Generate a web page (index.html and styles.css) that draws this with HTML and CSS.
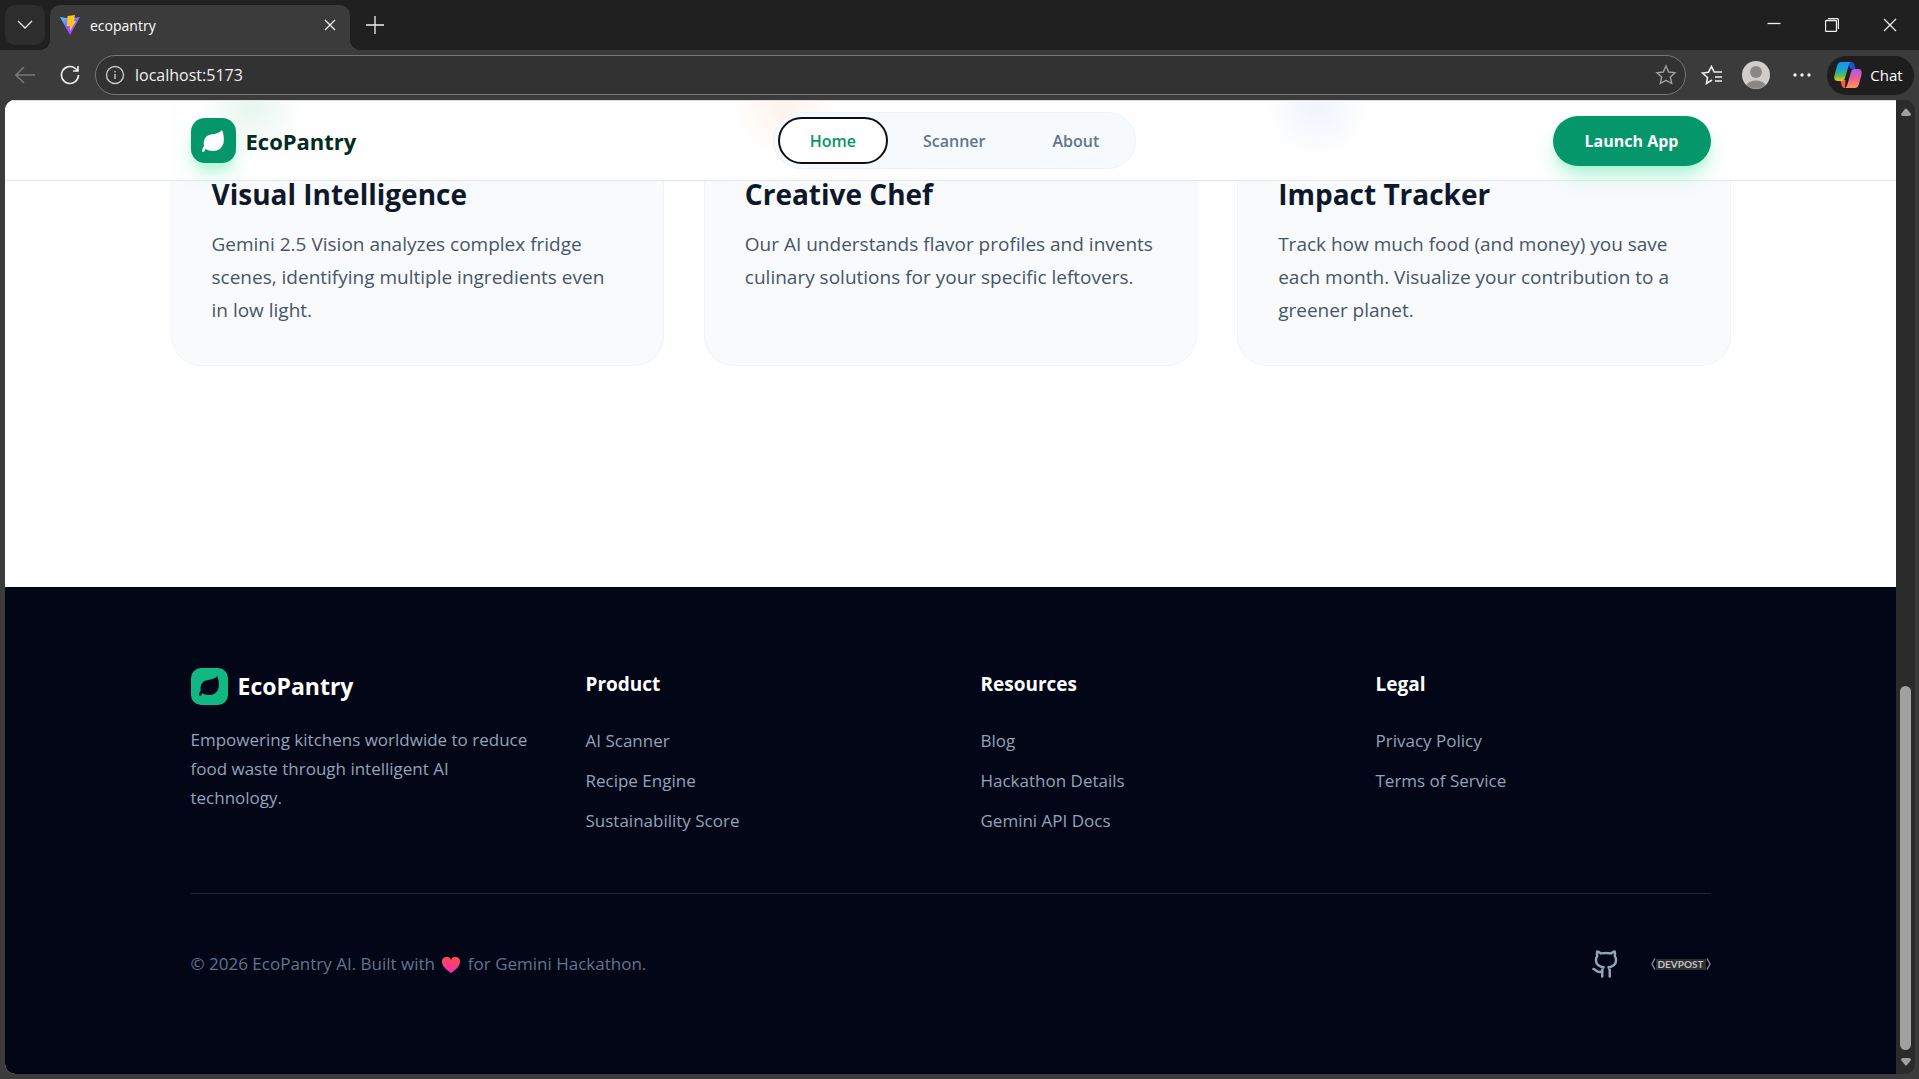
FILE: index.html
```html
<!DOCTYPE html>
<html lang="en">
<head>
  <meta charset="UTF-8" />
  <meta name="viewport" content="width=device-width, initial-scale=1.0" />
  <title>ecopantry</title>
  <link rel="stylesheet" href="styles.css">
</head>
<body>
  <div class="tab-strip">
    <button class="tab-menu" aria-label="Tab actions">
      <svg width="16" height="10" viewBox="0 0 16 10"><path d="M1 1l7 7 7-7" /></svg>
    </button>
    <div class="tab">
      <svg class="favicon" width="20" height="20" viewBox="0 0 20 20">
        <defs>
          <linearGradient id="vite" x1="0" y1="0" x2="0.6" y2="1">
            <stop offset="0" stop-color="#41d1ff" />
            <stop offset="0.5" stop-color="#8a6bff" />
            <stop offset="1" stop-color="#bd34fe" />
          </linearGradient>
        </defs>
        <path fill="url(#vite)" d="M0 2l10 1.500L20 2 10 20z" />
        <path fill="#ffc61c" d="M7.500 1L15 0l-1 6 2 0-6 10 0-5-3 0z" />
      </svg>
      <span class="tab-title">ecopantry</span>
      <button class="tab-close" aria-label="Close tab">
        <svg width="12" height="12" viewBox="0 0 12 12"><path d="M1 1l10 10M11 1L1 11" /></svg>
      </button>
    </div>
    <button class="new-tab" aria-label="New tab">
      <svg width="20" height="20" viewBox="0 0 20 20"><path d="M10 1v18M1 10h18" /></svg>
    </button>
    <div class="window-controls">
      <button aria-label="Minimize"><svg width="14" height="14" viewBox="0 0 14 14"><path d="M0.500 5.500h13" /></svg></button>
      <button aria-label="Restore"><svg width="14" height="14" viewBox="0 0 14 14"><rect x="0.500" y="2.500" width="11" height="11" rx="1" /><path d="M3 0.500h8.500a2 2 0 0 1 2 2V11" /></svg></button>
      <button aria-label="Close"><svg width="14" height="14" viewBox="0 0 14 14"><path d="M1 1l12 12M13 1L1 13" /></svg></button>
    </div>
  </div>

  <div class="toolbar">
    <button class="back" aria-label="Back">
      <svg width="20" height="18" viewBox="0 0 20 18"><path d="M20 9H1M9 1L1 9l8 8" /></svg>
    </button>
    <button class="reload" aria-label="Reload">
      <svg width="20" height="20" viewBox="0 0 20 20"><path d="M18.500 10A8.500 8.500 0 1 1 15.500 3.500L18 6M18 1v5h-5" /></svg>
    </button>
    <div class="address">
      <svg class="info" width="20" height="20" viewBox="0 0 20 20"><circle cx="10" cy="10" r="8.500" /><path d="M10 9v5M10 6v1.500" /></svg>
      <input type="text" value="localhost:5173" aria-label="Address" />
      <svg class="star" width="22" height="22" viewBox="0 0 22 22"><path d="M11 2l2.700 6 6.300 0.700-4.700 4.300 1.400 6.500L11 16.300 5.300 19.500 6.700 13 2 8.700 8.300 8z" /></svg>
    </div>
    <button class="favorites" aria-label="Favorites">
      <svg width="22" height="20" viewBox="0 0 22 20"><path d="M11 15L5.500 18.500 6.500 12.500 1.500 8 7.500 7.200 10.500 1.500 13.200 7H21M14 12h7M14 16h7" /></svg>
    </button>
    <button class="profile" aria-label="Profile">
      <svg width="28" height="28" viewBox="0 0 28 28"><circle cx="14" cy="14" r="14" fill="#d0cecb" /><circle cx="14" cy="11" r="6" fill="#8b8784" /><path d="M4.500 24a10.500 8 0 0 1 19 0A14 14 0 0 1 4.500 24z" fill="#8b8784" /></svg>
    </button>
    <button class="more" aria-label="More">
      <svg width="18" height="4" viewBox="0 0 18 4"><circle cx="2" cy="2" r="1.700" /><circle cx="9" cy="2" r="1.700" /><circle cx="16" cy="2" r="1.700" /></svg>
    </button>
    <button class="chat">
      <svg width="28" height="28" viewBox="0 0 28 28">
        <defs>
          <linearGradient id="cop1" x1="0" y1="0" x2="0" y2="1">
            <stop offset="0" stop-color="#1b8fe8" />
            <stop offset="0.4" stop-color="#17a7d8" />
            <stop offset="0.7" stop-color="#58b95a" />
            <stop offset="1" stop-color="#f5c518" />
          </linearGradient>
          <linearGradient id="cop2" x1="0" y1="0" x2="0" y2="1">
            <stop offset="0" stop-color="#a75cf0" />
            <stop offset="0.5" stop-color="#ef5a9b" />
            <stop offset="1" stop-color="#ff9a4a" />
          </linearGradient>
        </defs>
        <path fill="#1d4fd0" d="M13 1h4c2 0 3 1 3.500 3L21.500 8h-5z" />
        <path fill="#f4603c" d="M6.500 19h5l-0.500 8c-2 0-3-1-3.500-3z" />
        <path fill="url(#cop1)" d="M7 1h10c-1.500 1-2 2-2.500 4L11 17c-0.500 2-1.500 3-3.500 3H4c-4 0-4-3-3.400-6L3 5c0.800-2.500 2-4 4-4z" />
        <path fill="url(#cop2)" d="M21 27H11c1.500-1 2-2 2.500-4L17 11c0.500-2 1.500-3 3.500-3H24c4 0 4 3 3.400 6L25 23c-0.800 2.500-2 4-4 4z" />
      </svg>
      Chat
    </button>
  </div>

  <div class="viewport">
    <div class="page">
      <header class="navbar">
        <div class="glows"><span class="glow green"></span><span class="glow orange"></span><span class="glow blue"></span></div>
        <div class="container nav-inner">
          <a class="brand" href="#">
            <span class="brand-icon">
              <svg width="22" height="22" viewBox="0 0 22 22"><path d="M20 0C21.500 3 22 7 21.800 11 21.500 17 17 21 11 21 8 21 5.500 20.300 3.800 19 2.800 19.800 2.500 20.800 2.200 21.700H0.200C0 19.500 0.700 17.500 2 16 0.800 9.500 4 5 10 4.300 14 3.900 17.500 3 20 0z" /></svg>
            </span>
            EcoPantry
          </a>
          <nav class="nav-pill">
            <button class="active">Home</button>
            <button>Scanner</button>
            <button>About</button>
          </nav>
          <button class="launch">Launch App</button>
        </div>
      </header>

      <section class="features">
        <article class="card">
          <h3>Visual Intelligence</h3>
          <p>Gemini 2.5 Vision analyzes complex fridge scenes, identifying multiple ingredients even in low light.</p>
        </article>
        <article class="card">
          <h3>Creative Chef</h3>
          <p>Our AI understands flavor profiles and invents culinary solutions for your specific leftovers.</p>
        </article>
        <article class="card">
          <h3>Impact Tracker</h3>
          <p>Track how much food (and money) you save each month. Visualize your contribution to a greener planet.</p>
        </article>
      </section>

      <footer class="footer">
        <div class="container">
          <div class="footer-grid">
            <div>
              <div class="footer-brand">
                <span class="footer-icon">
                  <svg width="20" height="20" viewBox="0 0 22 22"><path d="M20 0C21.500 3 22 7 21.800 11 21.500 17 17 21 11 21 8 21 5.500 20.300 3.800 19 2.800 19.800 2.500 20.800 2.200 21.700H0.200C0 19.500 0.700 17.500 2 16 0.800 9.500 4 5 10 4.300 14 3.900 17.500 3 20 0z" /></svg>
                </span>
                EcoPantry
              </div>
              <p class="tagline">Empowering kitchens worldwide to reduce food waste through intelligent AI technology.</p>
            </div>
            <div>
              <h4>Product</h4>
              <ul>
                <li><a href="#">AI Scanner</a></li>
                <li><a href="#">Recipe Engine</a></li>
                <li><a href="#">Sustainability Score</a></li>
              </ul>
            </div>
            <div>
              <h4>Resources</h4>
              <ul>
                <li><a href="#">Blog</a></li>
                <li><a href="#">Hackathon Details</a></li>
                <li><a href="#">Gemini API Docs</a></li>
              </ul>
            </div>
            <div>
              <h4>Legal</h4>
              <ul>
                <li><a href="#">Privacy Policy</a></li>
                <li><a href="#">Terms of Service</a></li>
              </ul>
            </div>
          </div>

          <div class="footer-bottom">
            <p class="copyright">© 2026 EcoPantry AI. Built with
              <svg class="heart" width="18" height="16" viewBox="0 0 18 16">
                <defs><linearGradient id="heart" x1="0" y1="0" x2="0" y2="1"><stop offset="0" stop-color="#ff4a4a" /><stop offset="1" stop-color="#f02fb4" /></linearGradient></defs>
                <path fill="url(#heart)" d="M9 16C3 12 0 8.500 0 5a4.700 4.700 0 0 1 9-2.300A4.700 4.700 0 0 1 18 5c0 3.500-3 7-9 11z" />
              </svg>
              for Gemini Hackathon.</p>
            <div class="socials">
              <a href="#" aria-label="GitHub">
                <svg class="github" width="30" height="30" viewBox="0 0 24 24"><path d="M15 22v-4a4.800 4.800 0 0 0-1-3.500c3 0 6-2 6-5.500.080-1.250-.270-2.480-1-3.500.280-1.150.280-2.350 0-3.500 0 0-1 0-3 1.500-2.640-.5-5.360-.5-8 0C6 2 5 2 5 2c-.3 1.150-.3 2.350 0 3.500A5.403 5.403 0 0 0 4 9c0 3.500 3 5.500 6 5.500-.390.490-.680 1.050-.850 1.650-.170.600-.220 1.230-.150 1.850v4" /><path d="M9 18c-4.510 2-5-2-7-2" /></svg>
              </a>
              <a class="devpost" href="#">
                <svg width="5" height="12" viewBox="0 0 5 12"><path d="M4 0.500L1 6l3 5.500" /></svg>
                <span>DEVPOST</span>
                <svg width="5" height="12" viewBox="0 0 5 12"><path d="M1 0.500L4 6l-3 5.500" /></svg>
              </a>
            </div>
          </div>
        </div>
      </footer>
    </div>

    <div class="scrollbar">
      <svg width="10" height="8" viewBox="0 0 10 8"><path d="M4 1Q5 0 6 1L10 6Q10 8 8 8H2Q0 8 0 6z" /></svg>
      <div class="thumb"></div>
      <svg width="10" height="8" viewBox="0 0 10 8"><path d="M4 7Q5 8 6 7L10 2Q10 0 8 0H2Q0 0 0 2z" /></svg>
    </div>
  </div>
</body>
</html>
```
FILE: styles.css
```css
* {
  box-sizing: border-box;
}
body {
  margin: 0;
  height: 100vh;
  display: flex;
  flex-direction: column;
  overflow: hidden;
  background: #3b3b3b;
  font-family: "Segoe UI", "Open Sans", sans-serif;
}
button {
  font-family: inherit;
  border: none;
  background: none;
  padding: 0;
  cursor: pointer;
  display: flex;
  align-items: center;
  justify-content: center;
}
a {
  text-decoration: none;
}
h3, h4, p, ul {
  margin: 0;
  padding: 0;
}

/* browser tabs */
.tab-strip {
  flex: none;
  display: flex;
  height: 50px;
  padding: 5px 5px 0;
  background: #202020;
}
.tab-strip svg {
  fill: none;
  stroke: #f0f0f0;
  stroke-width: 1.3;
}
.tab-menu {
  width: 40px;
  height: 40px;
  margin-right: 5px;
  border-radius: 10px;
  background: #2d2d2d;
}
.tab {
  position: relative;
  display: flex;
  align-items: center;
  width: 300px;
  padding: 0 14px 5px 10px;
  border-radius: 10px 10px 0 0;
  background: #3b3b3b;
}
.tab::before, .tab::after {
  content: "";
  position: absolute;
  bottom: 0;
  width: 10px;
  height: 10px;
}
.tab::before {
  right: 100%;
  background: radial-gradient(circle at 0 0, transparent 10px, #3b3b3b 10px);
}
.tab::after {
  left: 100%;
  background: radial-gradient(circle at 100% 0, transparent 10px, #3b3b3b 10px);
}
.tab .favicon {
  stroke: none;
}
.tab-title {
  margin-left: 10px;
  color: #fff;
  font-size: 14px;
}
.tab-close {
  margin-left: auto;
}
.new-tab {
  width: 50px;
  height: 40px;
}
.window-controls {
  display: flex;
  margin: 0 -5px 0 auto;
  height: 40px;
}
.window-controls button {
  width: 58px;
}

/* address bar */
.toolbar {
  flex: none;
  display: flex;
  align-items: center;
  height: 50px;
  padding: 0 5px 0 15px;
}
.toolbar svg {
  flex: none;
}
.back svg, .reload svg, .favorites svg {
  fill: none;
  stroke: #f0f0f0;
  stroke-width: 1.6;
}
.back svg {
  stroke: #777;
}
.reload {
  margin: 0 15px 0 25px;
}
.address {
  flex: 1;
  display: flex;
  align-items: center;
  height: 40px;
  padding: 0 8px 0 9px;
  border: 1px solid #767676;
  border-radius: 20px;
  background: #323232;
}
.address svg {
  fill: none;
  stroke: #c8c8c8;
  stroke-width: 1.4;
}
.address .star {
  stroke: #a0a0a0;
}
.address input {
  flex: 1;
  margin-left: 10px;
  padding: 0;
  border: none;
  outline: none;
  background: none;
  color: #f0f0f0;
  font: 16px "Segoe UI", "Open Sans", sans-serif;
}
.favorites {
  margin: 0 19px 0 15px;
}
.more {
  margin: 0 16px 0 23px;
}
.more svg {
  fill: #f0f0f0;
}
.chat {
  gap: 8px;
  width: 87px;
  height: 39px;
  padding-right: 4px;
  border-radius: 20px;
  background: #1e1e1e;
  color: #fff;
  font-size: 15px;
}

/* page area */
.viewport {
  flex: 1;
  display: flex;
  min-height: 0;
  margin: 0 4px 5px 5px;
  border-radius: 10px;
  overflow: hidden;
  background: #2b2b2b;
}
.page {
  flex: 1;
  display: flex;
  flex-direction: column;
  overflow: hidden;
  background: #fff;
}
.container {
  width: 100%;
  max-width: 1560px;
  margin: 0 auto;
  padding: 0 20px;
}
.navbar {
  position: relative;
  z-index: 1;
  flex: none;
  height: 81px;
  border-top: 1px solid #e0e0e0;
  border-bottom: 1px solid #e2e8f0;
  background: #fff;
}
.glows {
  position: absolute;
  inset: 0;
  display: grid;
  grid-template-columns: repeat(3, 1fr);
  gap: 40px;
  max-width: 1560px;
  margin: 0 auto;
  overflow: hidden;
  background: #fefefe;
}
.glow {
  width: 160px;
  height: 60px;
}
.green {
  background: radial-gradient(circle at 50% 5px, #e6f6ef, #fefefe 50px);
}
.orange {
  background: radial-gradient(circle at 50% 5px, #fff3ec, #fefefe 50px);
}
.blue {
  background: radial-gradient(circle at 50% 5px, #f0f4ff, #fefefe 50px);
}
.nav-inner {
  position: relative;
  display: flex;
  align-items: center;
  justify-content: space-between;
  height: 79px;
}
.brand, .footer-brand {
  display: flex;
  align-items: center;
  gap: 10px;
  color: #022c22;
  font-size: 22px;
  font-weight: 700;
}
.brand-icon {
  display: flex;
  align-items: center;
  justify-content: center;
  width: 45px;
  height: 45px;
  border-radius: 14px;
  background: #059669;
  box-shadow: 0 12px 19px -4px #a7f3d0, 0 5px 8px -5px #a7f3d0;
}
.brand-icon svg {
  fill: #fff;
}
.nav-pill {
  display: flex;
  gap: 3px;
  padding: 4px;
  border: 1px solid #edf2f7;
  border-radius: 29px;
  background: #f7fafc;
}
.nav-pill button {
  height: 47px;
  padding: 0 30px;
  border: 2px solid transparent;
  border-radius: 24px;
  color: #64748b;
  font-size: 16px;
  font-weight: 600;
}
.nav-pill .active {
  border-color: #101010;
  background: #fff;
  color: #059669;
}
.launch {
  width: 158px;
  height: 50px;
  border-radius: 25px;
  background: #059669;
  color: #fff;
  font-size: 16px;
  font-weight: 700;
  box-shadow: 0 12px 19px -4px #a7f3d0, 0 5px 8px -5px #a7f3d0;
}

/* feature cards */
.features {
  flex: 1;
  display: grid;
  grid-template-columns: repeat(3, 1fr);
  align-items: start;
  grid-auto-rows: min-content;
  gap: 40px;
  width: 100%;
  max-width: 1560px;
  margin: 0 auto;
}
.card {
  height: 100%;
  padding: 0 40px 38px;
  border: 1px solid #f1f5f9;
  border-top: none;
  border-radius: 0 0 30px 30px;
  background: #f8fafc;
}
.card h3 {
  color: #0f172a;
  font-size: 28px;
  line-height: 26px;
  font-weight: 700;
}
.card p {
  margin-top: 21px;
  color: #475569;
  font-size: 19px;
  line-height: 33px;
}

/* footer */
.footer {
  flex: none;
  padding: 80px 0 95px;
  background: #020617;
}
.footer-grid {
  display: grid;
  grid-template-columns: repeat(4, 1fr);
  gap: 60px;
  padding-bottom: 52px;
}
.footer-brand {
  height: 38px;
  color: #fff;
  font-size: 23px;
}
.footer-icon {
  display: flex;
  align-items: center;
  justify-content: center;
  width: 37px;
  height: 37px;
  border-radius: 10px;
  background: #10b981;
}
.footer-icon svg {
  fill: #020617;
}
.tagline {
  margin: 20px -10px 0 0;
  color: #94a3b8;
  font-size: 17px;
  line-height: 29px;
}
.footer h4 {
  color: #fff;
  font-size: 19px;
  line-height: 34px;
  font-weight: 700;
}
.footer ul {
  margin-top: 20px;
  list-style: none;
}
.footer li {
  line-height: 40px;
}
.footer li a {
  color: #94a3b8;
  font-size: 17px;
}
.footer-bottom {
  display: flex;
  align-items: center;
  justify-content: space-between;
  padding-top: 55px;
  border-top: 1px solid #1e2433;
}
.copyright {
  color: #64748b;
  font-size: 17px;
  line-height: 30px;
}
.heart {
  margin: 0 3px;
  vertical-align: -3px;
}
.socials {
  display: flex;
  align-items: center;
  gap: 30px;
}
.github {
  display: block;
  fill: none;
  stroke: #94a3b8;
  stroke-width: 2;
  stroke-linecap: round;
  stroke-linejoin: round;
}
.devpost {
  display: flex;
  align-items: center;
  color: #c0c2c4;
  font: bold 10px/11px "Lato", sans-serif;
}
.devpost span {
  width: 50px;
  text-align: center;
  background: #2c2e30;
}
.devpost svg {
  fill: none;
  stroke: #8a8c8e;
  stroke-width: 1.4;
}

/* scrollbar */
.scrollbar {
  display: flex;
  flex-direction: column;
  align-items: center;
  width: 19px;
  padding: 8px 0;
}
.scrollbar svg {
  fill: #a0a0a0;
}
.thumb {
  width: 11px;
  height: 38%;
  margin: auto 0 8px;
  border-radius: 6px;
  background: #a0a0a0;
}
```
